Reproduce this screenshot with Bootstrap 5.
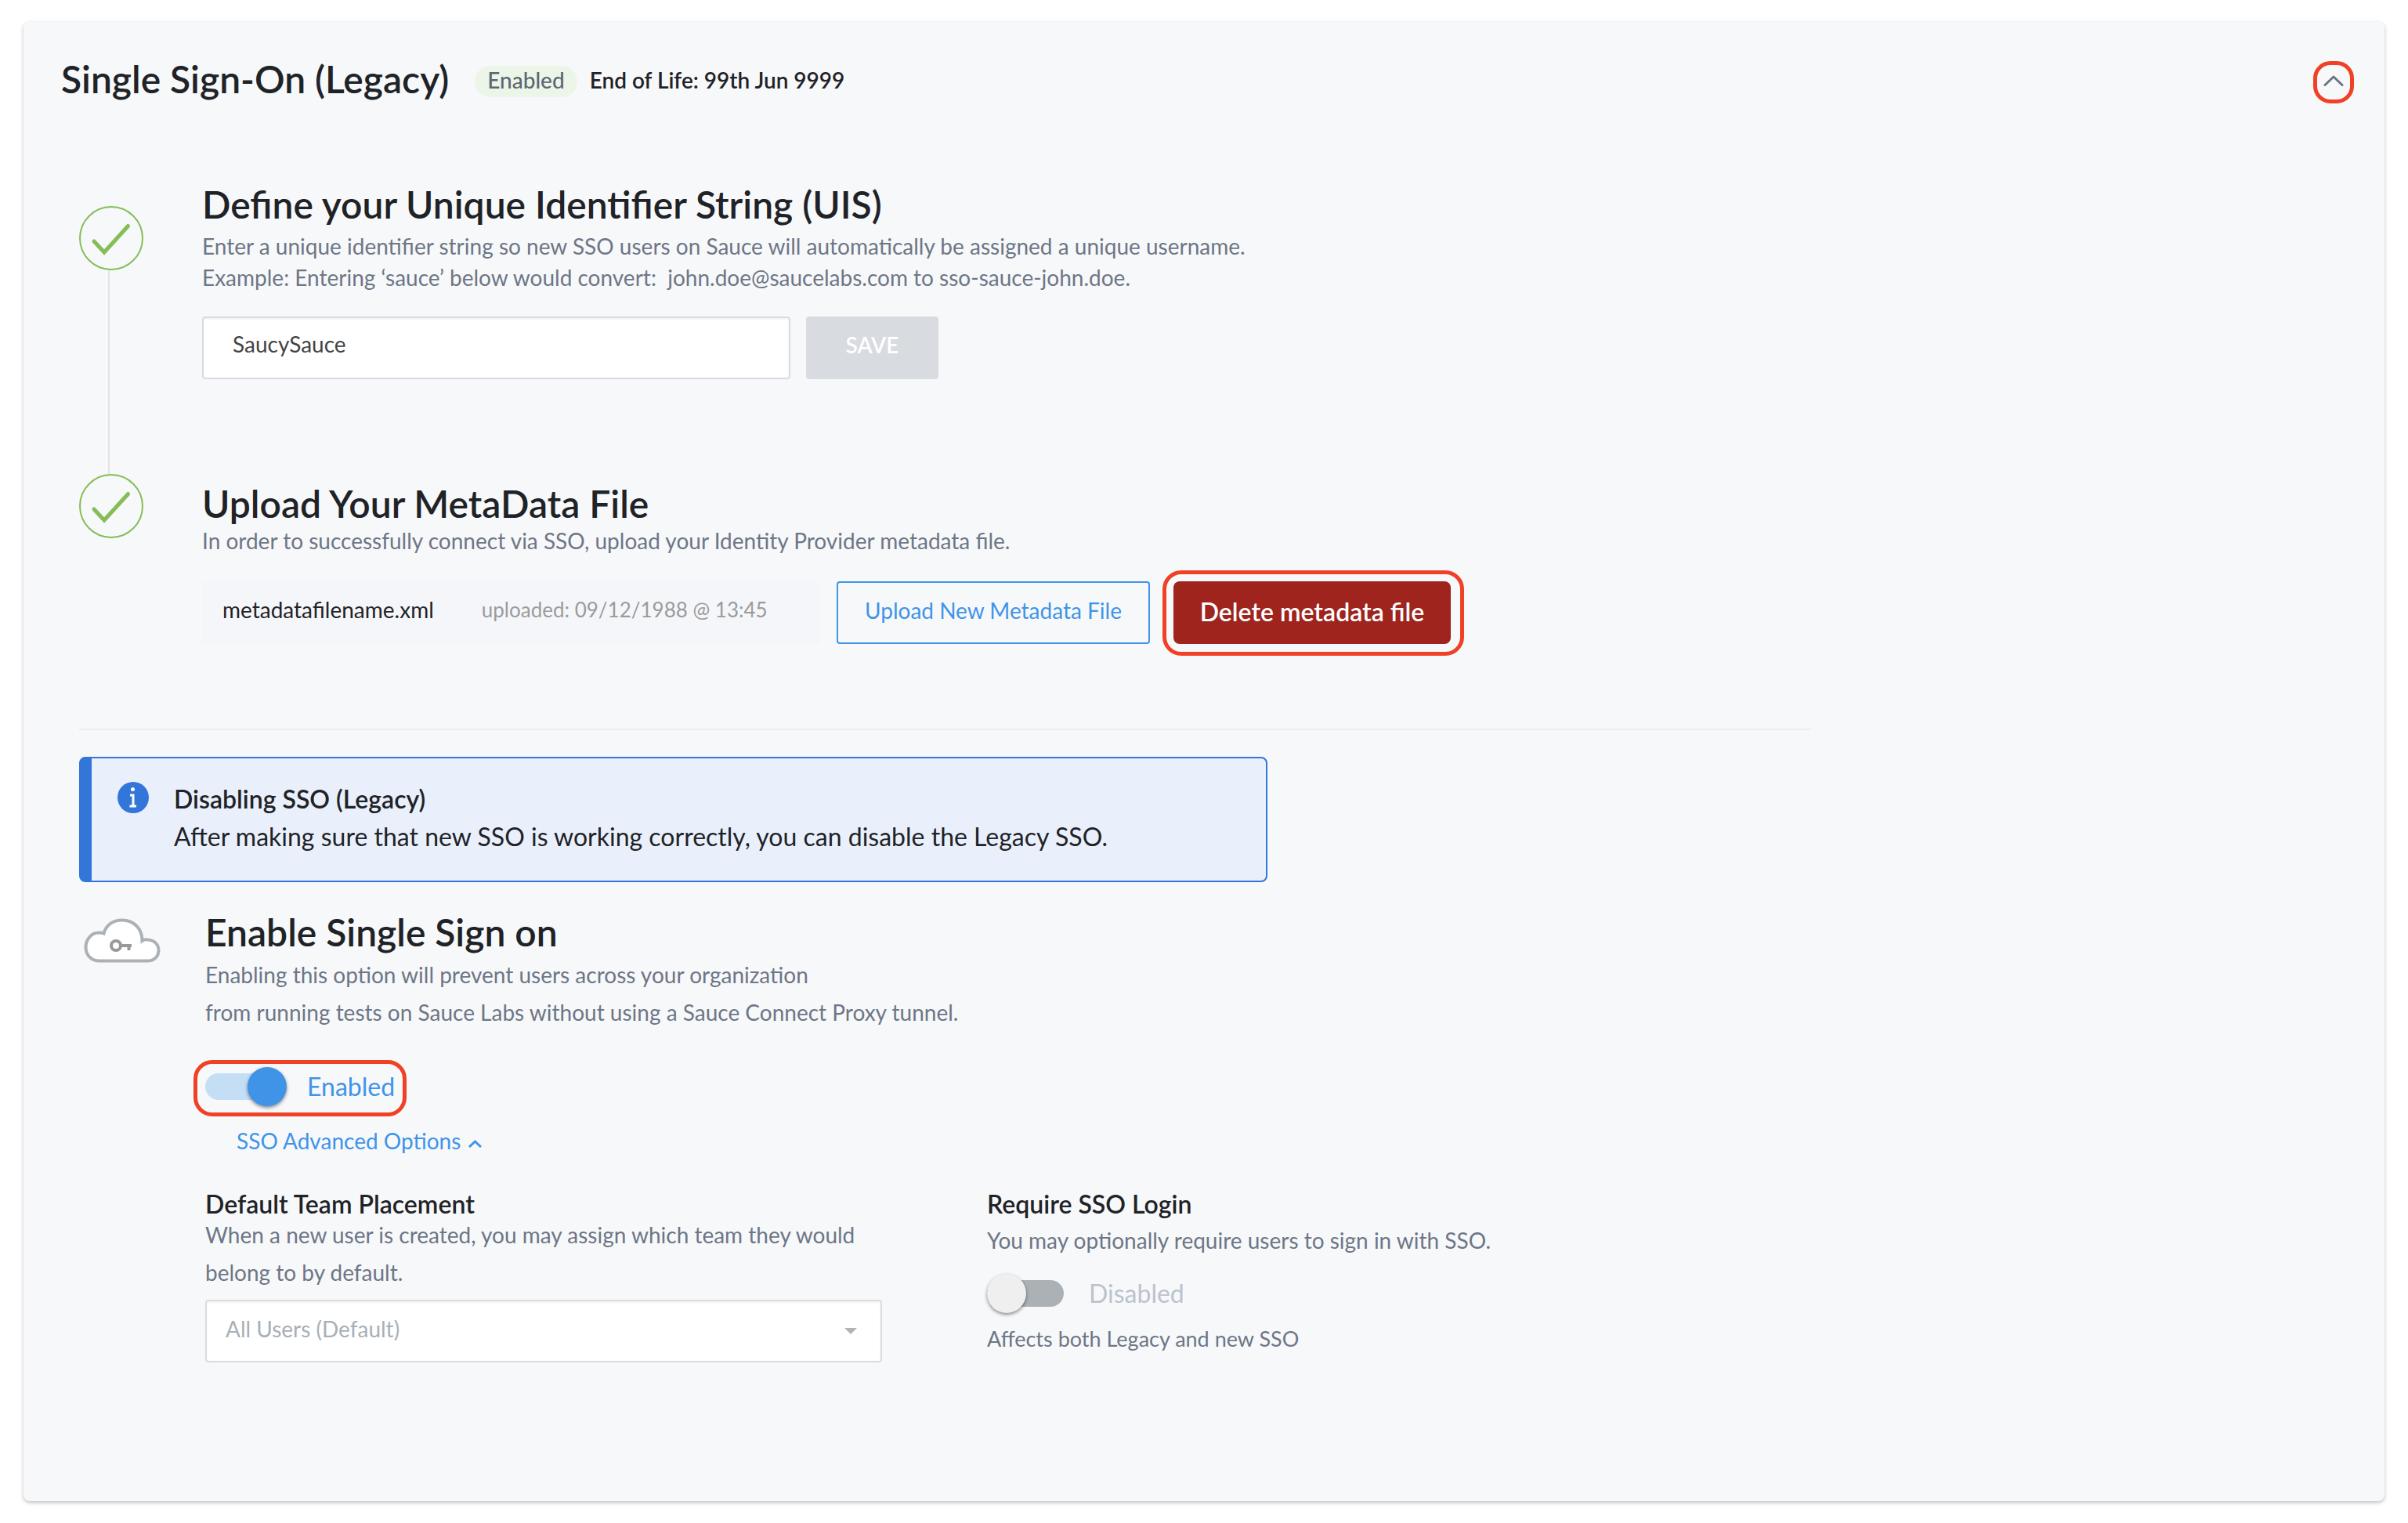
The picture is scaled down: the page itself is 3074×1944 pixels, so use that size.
<!DOCTYPE html>
<html lang="en">
<head>
<meta charset="utf-8">
<meta name="viewport" content="width=device-width, initial-scale=1">
<title>Single Sign-On (Legacy)</title>
<link href="https://cdn.jsdelivr.net/npm/bootstrap@5.3.0/dist/css/bootstrap.min.css" rel="stylesheet">
<style>
  :root { --ink: #1f2327; --muted-ink: #6d7686; --sky: #4094e8; --info: #3276d9; --line: #d8dbe0; --ok: #86bd58; --callout: #f04025; }
  body { font-family: Lato, "Open Sans", sans-serif; font-size: 28px; line-height: 40px; color: var(--ink); background: #fff; }
  .panel { margin: 28px 30px; background: #f7f8fa; border-radius: 8px; box-shadow: 0 2px 5px rgba(0,0,0,.25); padding-bottom: 177px; }
  .panel-head { padding: 50px 39px 0 48px; }
  .panel-head h1 { font-size: 48px; line-height: 46px; font-weight: 600; margin: 0 33px 0 0; }
  .state-pill { background: #ecf6e8; color: #5c6772; line-height: 36px; font-weight: 500; border-radius: 20px; padding: 0 16px 4px; margin: 6px 16px 0 0; }
  .eol { line-height: 48px; font-weight: 600; }
  .collapse-btn { width: 52px; height: 54px; border: 5px solid var(--callout); border-radius: 22px; background: none; color: #6d7480; padding: 0 0 4px; }
  .panel-main { padding: 100px 48px 0 71px; }
  .rail { width: 157px; }
  .rail-first { padding-top: 31px; }
  .rail-line { width: 2px; margin-left: 37px; background: #e1e3e5; }
  .step-body-first { padding: 3px 0 121px; }
  .step-body-last { padding: 12px 0 108px; }
  h2 { font-size: 48px; line-height: 52px; font-weight: 600; margin: 0; }
  h3 { font-size: 32px; line-height: 30px; font-weight: 600; margin: 0; }
  .hint { color: var(--muted-ink); margin: 0; }
  .hint-tall { line-height: 48px; }
  .step-body-first .hint { margin: 7px 0 30px; }
  .step-body-last .hint { margin: 1px 0 32px; }
  .uis-form { gap: 20px; }
  .ctl { height: 80px; font-size: 28px; line-height: 40px; border: 2px solid var(--line); border-radius: 4px; box-shadow: inset 0 2px 3px rgba(0,0,0,.05); }
  .uis-input { width: 751px; padding: 14px 37px 24px; color: #444; }
  .save-btn, .save-btn:disabled { width: 169px; height: 80px; border: 0; border-radius: 4px; background: var(--line); color: #fff; opacity: 1; font-size: 28px; font-weight: 600; padding: 0 0 8px; }
  .file-box { width: 788px; height: 80px; background: #f5f6fa; padding: 0 26px 8px; gap: 61px; }
  .file-box time { color: #9b9b9b; font-size: 26px; }
  .upload-btn { width: 400px; height: 80px; font-size: 28px; border: 2px solid var(--sky); color: var(--sky); border-radius: 4px; padding: 0 0 6px; margin: 0 30px 0 22px; }
  .delete-btn { width: 354px; height: 80px; font-size: 32px; font-weight: 600; background: #9e241d; color: #fff; border: 0; border-radius: 8px; padding: 0 0 2px; }
  .callout-ring::after { content: ""; position: absolute; inset: -14px -17px -15px -14px; border: 5px solid var(--callout); border-radius: 24px; pointer-events: none; }
  .callout-ring.sw::after { inset: -9px -15px -13px -15px; }
  .divider { max-width: 2211px; border-top: 2px solid #ebedef; margin: 0; opacity: 1; }
  .notice { max-width: 1517px; margin: 34px 0 38px; padding: 28px 30px 32px 33px; gap: 32px; border: 2px solid var(--info); border-left-width: 16px; border-radius: 8px; background: #e9f0fc; font-size: 32px; line-height: 48px; color: var(--ink); }
  .notice svg { margin-top: 2px; }
  .cloud-col { width: 161px; padding: 8px 0 0 6px; }
  .enable-body .hint-tall { margin-top: 4px; }
  .sw { gap: 26px; padding: 0; margin: 0; min-height: 0; line-height: 50px; font-size: 32px; color: var(--sky); }
  .sw .form-check-input { position: relative; flex: none; float: none; width: 104px; height: 50px; margin: 0; border: 0; background: none; box-shadow: none; opacity: 1; border-radius: 0; }
  .sw .form-check-input::before { content: ""; position: absolute; left: 0; top: 8px; width: 98px; height: 34px; border-radius: 17px; background: #abb1b5; }
  .sw .form-check-input::after { content: ""; position: absolute; left: 0; top: 0; width: 50px; height: 50px; border-radius: 50%; background: #efefef; box-shadow: 0 2px 4px rgba(0,0,0,.45); }
  .sw .form-check-input:checked::before { background: #c4def6; }
  .sw .form-check-input:checked::after { left: 54px; background: var(--sky); }
  .sw .form-check-input:disabled ~ .form-check-label { color: #bcc3cc; opacity: 1; }
  .sw-main { margin-top: 46px; }
  .adv-link { margin: 24px 0 46px 40px; color: var(--sky); gap: 10px; }
  .team-col { width: 864px; }
  .opt-cols { gap: 134px; }
  .team-select, .team-select:disabled { color: #a9afb6; padding: 15px 60px 23px 24px; margin-top: 11px; background: #fff url("data:image/svg+xml,%3Csvg xmlns='http://www.w3.org/2000/svg' viewBox='0 0 16 8'%3E%3Cpath fill='%23b3b3b3' d='M0 0h16L8 8z'/%3E%3C/svg%3E") no-repeat right 30px center / 16px 8px; }
  .team-col .hint-tall { margin-top: 0; }
  .require-col .hint-tall { margin-top: 7px; }
  .require-col .sw { margin: 19px 0 13px; }
  .fine { font-size: 27px; }
</style>
</head>
<body>
<main class="panel">
  <header class="panel-head d-flex align-items-start">
    <h1>Single Sign-On (Legacy)</h1>
    <span class="state-pill">Enabled</span>
    <span class="eol">End of Life: 99th Jun 9999</span>
    <button type="button" class="collapse-btn ms-auto d-flex align-items-center justify-content-center" aria-label="Collapse section">
      <svg width="26" height="16" viewBox="0 0 26 16" fill="none" stroke="currentColor" stroke-width="3" stroke-linecap="round" stroke-linejoin="round"><path d="M2 13.500 13 3l11 10.500"/></svg>
    </button>
  </header>

  <div class="panel-main">
    <section class="d-flex">
      <div class="rail rail-first d-flex flex-column flex-shrink-0">
        <svg width="82" height="82" viewBox="0 0 82 82" fill="none" stroke="#86bd58"><circle cx="41" cy="41" r="40" stroke-width="2"/><path d="M19 45 32 59 62.500 25.500" stroke-width="5" stroke-linecap="round"/></svg>
        <div class="rail-line flex-grow-1"></div>
      </div>
      <div class="step-body-first">
        <h2>Define your Unique Identifier String (UIS)</h2>
        <p class="hint">Enter a unique identifier string so new SSO users on Sauce will automatically be assigned a unique username.<br>Example: Entering ‘sauce’ below would convert:&nbsp; john.doe@saucelabs.com to sso-sauce-john.doe.</p>
        <form class="uis-form d-flex">
          <input type="text" class="form-control ctl uis-input" value="SaucySauce" aria-label="Unique identifier string">
          <button type="submit" class="btn save-btn" disabled>SAVE</button>
        </form>
      </div>
    </section>

    <section class="d-flex">
      <div class="rail flex-shrink-0">
        <svg class="d-block" width="82" height="82" viewBox="0 0 82 82" fill="none" stroke="#86bd58"><circle cx="41" cy="41" r="40" stroke-width="2"/><path d="M19 45 32 59 62.500 25.500" stroke-width="5" stroke-linecap="round"/></svg>
      </div>
      <div class="step-body-last">
        <h2>Upload Your MetaData File</h2>
        <p class="hint">In order to successfully connect via SSO, upload your Identity Provider metadata file.</p>
        <div class="d-flex">
          <div class="file-box d-flex align-items-center"><span>metadatafilename.xml</span><time>uploaded: 09/12/1988 @ 13:45</time></div>
          <button type="button" class="btn upload-btn">Upload New Metadata File</button>
          <div class="callout-ring position-relative"><button type="button" class="btn delete-btn">Delete metadata file</button></div>
        </div>
      </div>
    </section>

    <hr class="divider">

    <div class="notice d-flex align-items-start" role="note">
      <svg class="flex-shrink-0" width="40" height="40" viewBox="0 0 40 40"><circle cx="20" cy="20" r="20" fill="#3276d9"/><circle cx="19.500" cy="9.500" r="2.500" fill="#fff"/><path d="M16 17h4v14M15.500 31h8.500" fill="none" stroke="#fff" stroke-width="3"/></svg>
      <div><strong class="fw-semibold">Disabling SSO (Legacy)</strong><br>After making sure that new SSO is working correctly, you can disable the Legacy SSO.</div>
    </div>

    <section class="d-flex">
      <div class="cloud-col flex-shrink-0">
        <svg class="d-block" width="98" height="58" viewBox="0 0 98 58"><path d="M20 54.500C9 54.500 2.500 46.500 2.500 37S9.500 18.500 19 18.500c2 0 4 0 6.500 1C28 9 37 2.500 49 2.500c15 0 25.500 11 25.500 26.500 2-1.500 4.500-2 7-1.500C90 28 95.500 33.500 95.500 41S90 54.500 81 54.500z" fill="#fff" stroke="#abb1b5" stroke-width="4"/><circle cx="41" cy="35" r="6" fill="none" stroke="#999" stroke-width="4"/><path d="M47 35h14M57.500 35v6" fill="none" stroke="#999" stroke-width="4"/></svg>
      </div>
      <div class="enable-body">
        <h2>Enable Single Sign on</h2>
        <p class="hint hint-tall">Enabling this option will prevent users across your organization<br>from running tests on Sauce Labs without using a Sauce Connect Proxy tunnel.</p>
        <div class="d-flex sw-main">
          <div class="callout-ring position-relative form-check form-switch sw d-flex">
            <input class="form-check-input" type="checkbox" role="switch" id="ssoEnabled" checked>
            <label class="form-check-label" for="ssoEnabled">Enabled</label>
          </div>
        </div>
        <div class="d-flex"><a href="#advanced" class="adv-link d-flex align-items-center text-decoration-none">SSO Advanced Options
          <svg class="mt-2" width="17" height="10" viewBox="0 0 17 10" fill="none" stroke="currentColor" stroke-width="3"><path d="M1 9l7.500-7L16 9"/></svg></a></div>
        <div class="d-flex opt-cols" id="advanced">
          <div class="team-col">
            <h3><label for="team">Default Team Placement</label></h3>
            <p class="hint hint-tall">When a new user is created, you may assign which team they would<br>belong to by default.</p>
            <select class="form-select ctl team-select" id="team" disabled><option>All Users (Default)</option></select>
          </div>
          <div class="require-col">
            <h3>Require SSO Login</h3>
            <p class="hint hint-tall">You may optionally require users to sign in with SSO.</p>
            <div class="form-check form-switch sw d-flex">
              <input class="form-check-input" type="checkbox" role="switch" id="ssoRequired" disabled>
              <label class="form-check-label" for="ssoRequired">Disabled</label>
            </div>
            <p class="hint fine">Affects both Legacy and new SSO</p>
          </div>
        </div>
      </div>
    </section>
  </div>
</main>
<script src="https://cdn.jsdelivr.net/npm/bootstrap@5.3.0/dist/js/bootstrap.bundle.min.js"></script>
</body>
</html>
